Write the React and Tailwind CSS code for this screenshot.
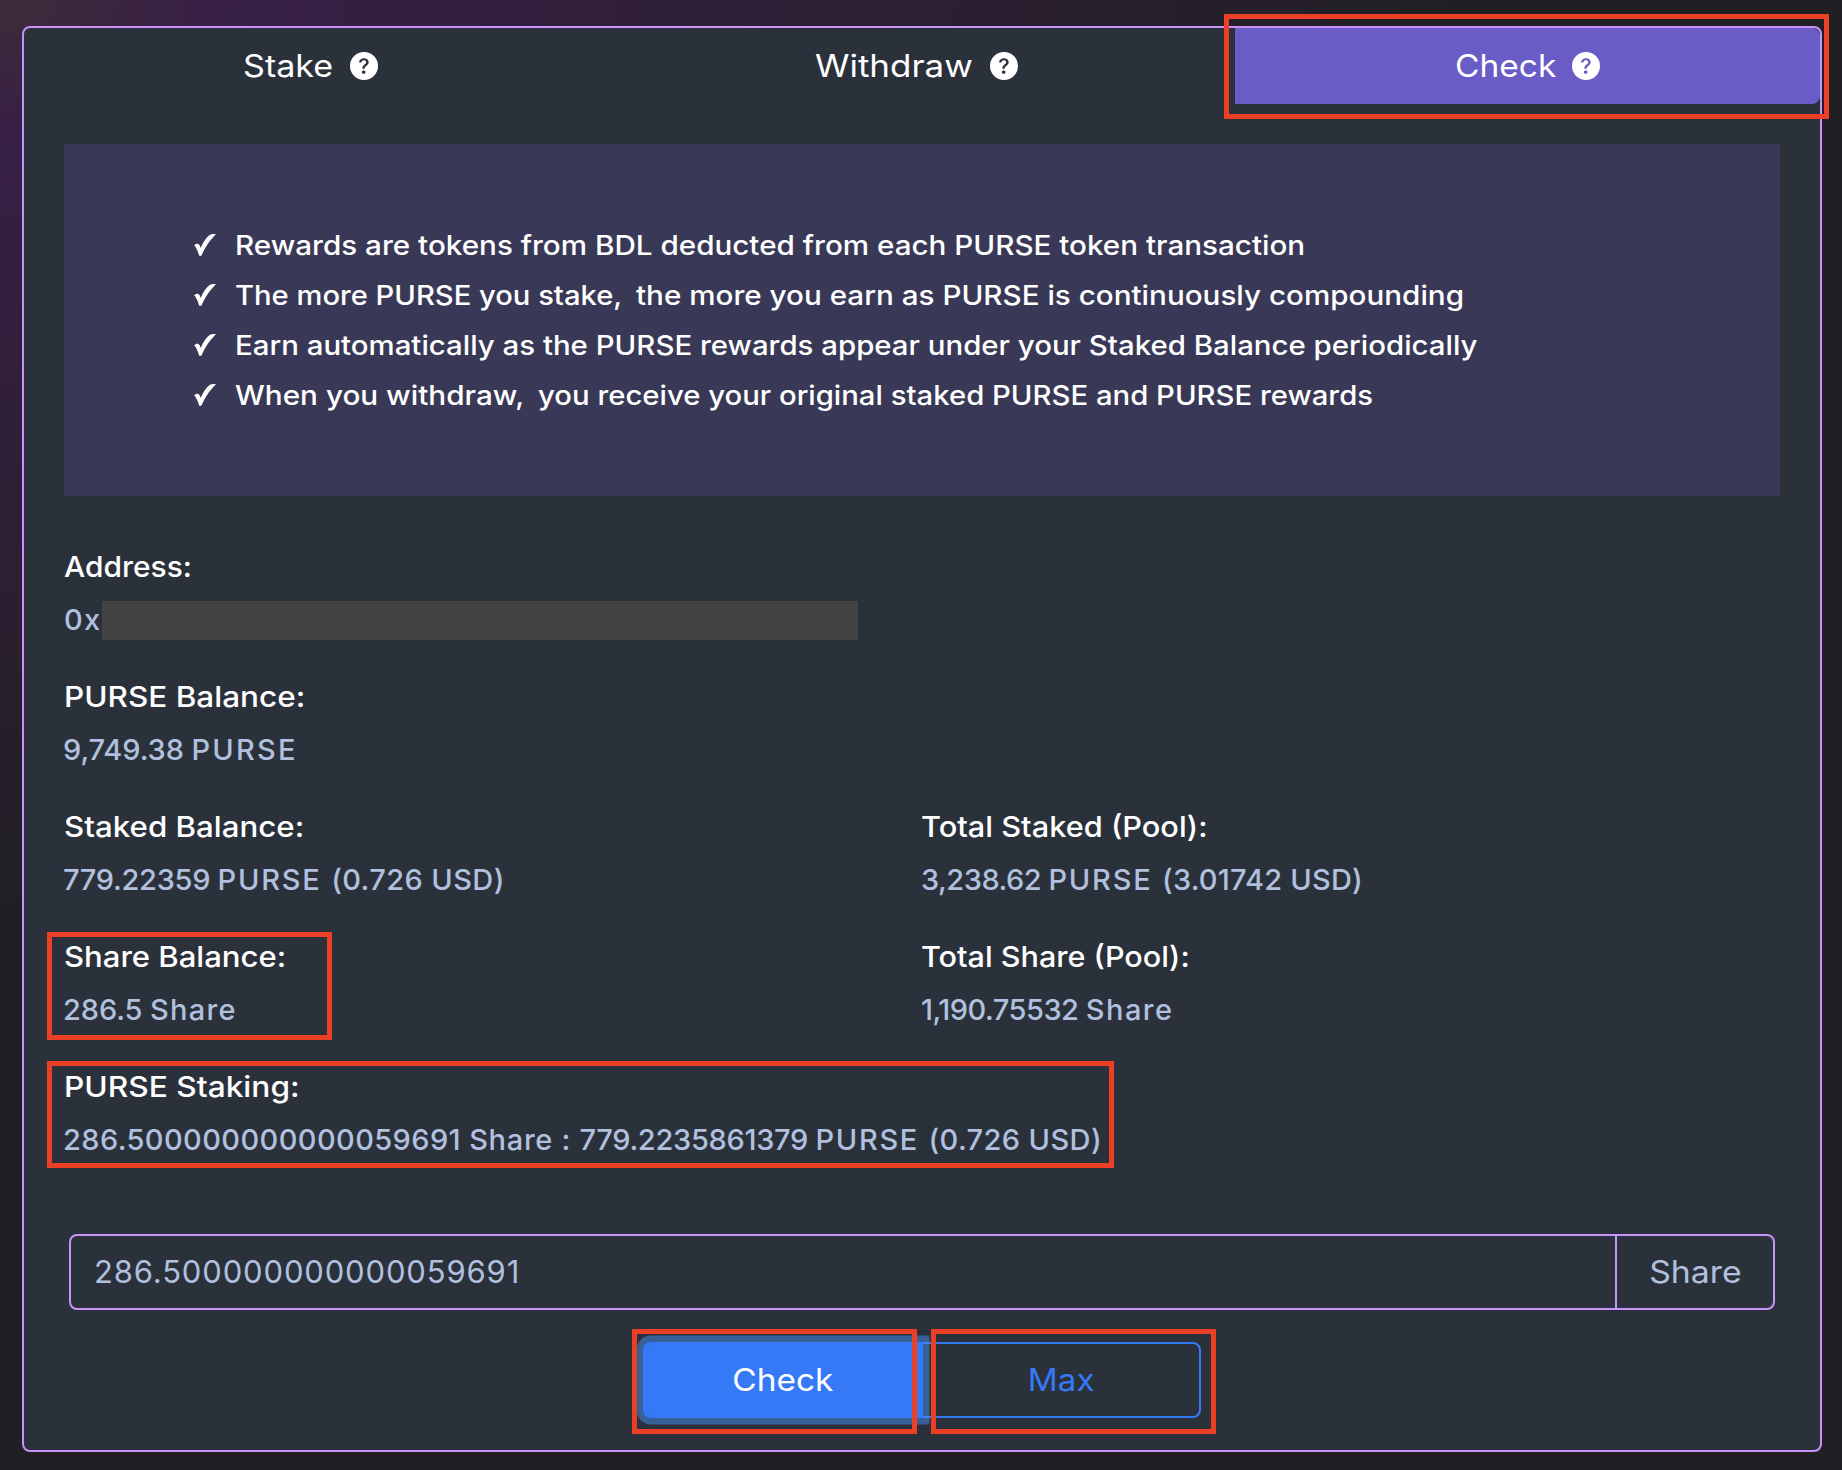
import React from 'react';
import { BsQuestionCircleFill } from 'react-icons/bs';

const TABS = [
  { label: 'Stake', box: 'w-[574px]', stretch: 'scale-x-[1.1] -ml-px mr-[26px]' },
  { label: 'Withdraw', box: 'w-[637px]', stretch: 'scale-x-[1.128] mr-[35px]' },
  { label: 'Check', box: 'w-[585px] rounded-r-lg bg-[#695cc6]', stretch: 'scale-x-[1.08] mr-[24px]' },
];

const NOTES = [
  [{ text: 'Rewards are tokens from BDL deducted from each PURSE token transaction', stretch: 'scale-x-[1.097]' }],
  [
    { text: 'The more PURSE you stake,', stretch: 'scale-x-[1.08]' },
    { text: 'the more you earn as PURSE is continuously compounding', stretch: 'scale-x-[1.097] ml-[43px]' },
  ],
  [{ text: 'Earn automatically as the PURSE rewards appear under your Staked Balance periodically', stretch: 'scale-x-[1.089]' }],
  [
    { text: 'When you withdraw,', stretch: 'scale-x-[1.1]' },
    { text: 'you receive your original staked PURSE and PURSE rewards', stretch: 'scale-x-[1.085] ml-[40px]' },
  ],
];

function Tab({ label, box, stretch }) {
  return (
    <button className={`flex h-[76px] items-center justify-center text-[31px] leading-[76px] text-white ${box}`}>
      <span className={`origin-left ${stretch}`}>{label}</span>
      <BsQuestionCircleFill className="size-7" />
    </button>
  );
}

function Tick() {
  return (
    <svg viewBox="0 0 22 22" className="size-[22px] shrink-0 fill-white">
      <path d="M0 11.6C1.6 9.9 3.2 9.3 4.4 10.1C5.6 10.9 6.2 12.3 6.7 13.9C9.2 8.4 12.2 3.6 15.6 1.1C17.2.1 19.4 0 22 .1C16.6 5.8 11.6 12 7.4 21.8L5.2 21.8C4.3 18.9 3.2 15.8 1.7 13.3C1.2 12.4.7 11.8 0 11.6Z" />
    </svg>
  );
}

function Stat({ label, stretch, children }) {
  return (
    <div className="mb-6 w-1/2 text-[29px] leading-[53px] font-medium whitespace-pre">
      <div className={`w-max origin-left text-white ${stretch}`}>{label}</div>
      <div className="flex h-[53px] text-[#b0c0de]">{children}</div>
    </div>
  );
}

function Highlight({ place }) {
  return <div className={`pointer-events-none absolute z-20 border-[5px] border-[#eb4025] ${place}`} />;
}

export default function App() {
  return (
    <div className="relative h-[1470px] w-[1842px] overflow-hidden bg-[#211f24] bg-[radial-gradient(1450px_900px_at_0_0,#3e2c3a_0%,#371f45_15%,#2d1f34_58%,#211f24_100%)] pt-[26px] pl-[22px] font-['Inter',sans-serif]">
      <main className="h-[1426px] w-[1800px] rounded-lg border-2 border-[#c793fb] bg-[#2b313b]">
        <nav className="flex">
          {TABS.map((tab) => (
            <Tab key={tab.label} {...tab} />
          ))}
        </nav>

        <ul className="mx-10 mt-10 h-[352px] bg-[#393957] pt-[77px] pl-[130px]">
          {NOTES.map((parts) => (
            <li key={parts[0].text} className="flex h-[50px] items-center text-[27px] leading-[50px] font-medium whitespace-nowrap text-white">
              <span className="-mt-0.5 mr-[19px]">
                <Tick />
              </span>
              {parts.map((part) => (
                <span key={part.text} className={`origin-left ${part.stretch}`}>
                  {part.text}
                </span>
              ))}
            </li>
          ))}
        </ul>

        <section className="mx-10 mt-11">
          <Stat label="Address:" stretch="scale-x-[1.032]">
            <span className="tracking-[1.4px]">0x</span>
            <span className="mt-2 h-[39px] w-[756px] bg-[#434343]" />
          </Stat>
          <Stat label="PURSE Balance:" stretch="scale-x-[1.086]">
            <span className="-ml-px tracking-[-0.1px]">9,749.38 </span>
            <span className="tracking-[2.2px]">PURSE</span>
          </Stat>
          <div className="flex">
            <Stat label="Staked Balance:" stretch="scale-x-[1.078]">
              <span className="-ml-px tracking-[-0.3px]">779.22359 </span>
              <span className="tracking-[1.8px]">PURSE </span>
              <span className="tracking-[0.4px]">(0.726 USD)</span>
            </Stat>
            <Stat label="Total Staked (Pool):" stretch="-ml-px scale-x-[1.06]">
              <span className="-ml-px tracking-[-0.5px]">3,238.62 </span>
              <span className="tracking-[1.8px]">PURSE </span>
              <span className="tracking-[0.2px]">(3.01742 USD)</span>
            </Stat>
          </div>
          <div className="flex">
            <Stat label="Share Balance:" stretch="scale-x-[1.071]">
              <span className="-ml-px tracking-[-0.1px]">286.5 </span>
              <span className="tracking-[1.3px]">Share</span>
            </Stat>
            <Stat label="Total Share (Pool):" stretch="-ml-px scale-x-[1.054]">
              <span className="-ml-px tracking-[-0.5px]">1,190.75532 </span>
              <span className="tracking-[1.5px]">Share</span>
            </Stat>
          </div>
          <Stat label="PURSE Staking:" stretch="scale-x-[1.092]">
            <span className="-ml-px tracking-[0.4px]">286.500000000000059691 </span>
            <span className="tracking-[0.7px]">Share : </span>
            <span className="tracking-[-0.3px]">779.2235861379 </span>
            <span className="tracking-[1.7px]">PURSE </span>
            <span className="tracking-[0.4px]">(0.726 USD)</span>
          </Stat>
        </section>

        <div className="mt-[68px] ml-[45px] flex h-[76px] w-[1706px] rounded-lg border-2 border-[#c793fb] text-[31px] leading-[72px] text-[#b0c0de]">
          <div className="flex-1 pl-[23px] tracking-[0.85px]">286.500000000000059691</div>
          <div className="w-[158px] border-l-2 border-[#c793fb] text-center">
            <span className="inline-block scale-x-[1.09]">Share</span>
          </div>
        </div>

        <div className="mt-8 ml-[619px] flex text-[31px] leading-[72px]">
          <button className="z-10 h-[76px] w-[280px] rounded-l-lg border-2 border-[#3579f7] bg-[#3579f7] text-white shadow-[0_0_0_6.4px_rgba(71,143,241,0.5)]">
            <span className="inline-block scale-x-[1.078]">Check</span>
          </button>
          <button className="-ml-0.5 h-[76px] w-[280px] rounded-r-lg border-2 border-[#3579f7] text-[#3579f7]">
            <span className="inline-block scale-x-[1.07]">Max</span>
          </button>
        </div>
      </main>

      <Highlight place="left-[1224px] top-[14px] h-[105px] w-[605px]" />
      <Highlight place="left-[47px] top-[932px] h-[108px] w-[285px]" />
      <Highlight place="left-[47px] top-[1061px] h-[107px] w-[1067px]" />
      <Highlight place="left-[632px] top-[1329px] h-[105px] w-[285px]" />
      <Highlight place="left-[931px] top-[1329px] h-[105px] w-[285px]" />
    </div>
  );
}
